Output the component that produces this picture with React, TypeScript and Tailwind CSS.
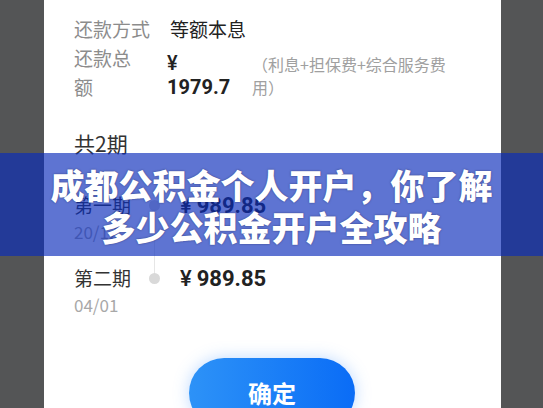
import type { ReactNode } from "react";

const cjk = { fontFamily: '"Noto Sans CJK SC", "Noto Sans", sans-serif' };
const num = { fontFamily: 'Roboto, "Noto Sans CJK SC", sans-serif' };

function Period({ title, date, amount, last }: { title: string; date: string; amount: string; last?: boolean }) {
  return (
    <div className="flex items-start">
      <div className="w-[66px]">
        <div className="text-[19px] leading-[28px] text-[#333]">{title}</div>
        <div className="text-[17px] leading-[26px] text-[#a8a8a8]">{date}</div>
      </div>
      <div className="relative flex h-[28px] w-[28px] items-center justify-center">
        {!last && <div className="absolute left-[13.5px] top-[14px] h-[73px] w-px bg-[#e6e6e6]" />}
        <div className="relative h-[11px] w-[11px] rounded-full bg-[#d9d9d9]" />
      </div>
      <div className="ml-[12px] flex items-center gap-[5px] text-[22px] font-bold leading-[30px] text-[#222]" style={num}>
        <span className="font-medium">¥</span>
        <span>{amount}</span>
      </div>
    </div>
  );
}

function InfoRow({ label, children }: { label: ReactNode; children: ReactNode }) {
  return (
    <div className="flex items-start">
      <div className="w-[96px] text-[19px] leading-[29px] text-[#8c8c8c]">{label}</div>
      {children}
    </div>
  );
}

export default function App() {
  return (
    <div className="relative h-[408px] w-[543px] overflow-hidden bg-[#545556]" style={cjk}>
      <div className="ml-[44px] h-full w-[457px] bg-white pl-[30px] pt-[14px]">
        <InfoRow label="还款方式">
          <div className="text-[19px] leading-[29px] text-[#222]">等额本息</div>
        </InfoRow>
        <InfoRow
          label={
            <>
              还款总
              <br />
              额
            </>
          }
        >
          <div className="-ml-[3px] mt-[8px] w-[85px] text-[20px] font-bold leading-[24px] text-[#222]" style={num}>
            <span className="font-medium">¥</span>
            <br />
            1979.7
          </div>
          <div className="mt-[10px] text-[16px] leading-[23px] text-[#a0a0a0]">
            （利息+担保费+综合服务费
            <br />
            用）
          </div>
        </InfoRow>

        <div className="mt-[27px] text-[21px] leading-[30px] text-[#333]">共2期</div>

        <div className="mt-[33px] flex flex-col gap-[19px]">
          <Period title="第一期" date="20/12" amount="989.85" />
          <Period title="第二期" date="04/01" amount="989.85" last />
        </div>

        <div className="ml-[115px] mt-[40px] flex h-[70px] w-[166px] items-center justify-center rounded-full bg-gradient-to-r from-[#2d92f7] to-[#0a6cf6] text-[24px] font-bold text-white shadow-[0_0_16px_rgba(70,150,255,0.35)]">
          确定
        </div>
      </div>

      {/* title banner across the screen */}
      <div className="absolute left-0 right-0 top-[153px] h-[103px] bg-[rgba(10,44,186,0.66)] pt-[11px] text-center text-[34px] font-black leading-[42px] text-white [text-shadow:0_0_2px_rgba(0,0,40,0.5)]">
        成都公积金个人开户，你了解
        <br />
        多少公积金开户全攻略
      </div>
    </div>
  );
}
